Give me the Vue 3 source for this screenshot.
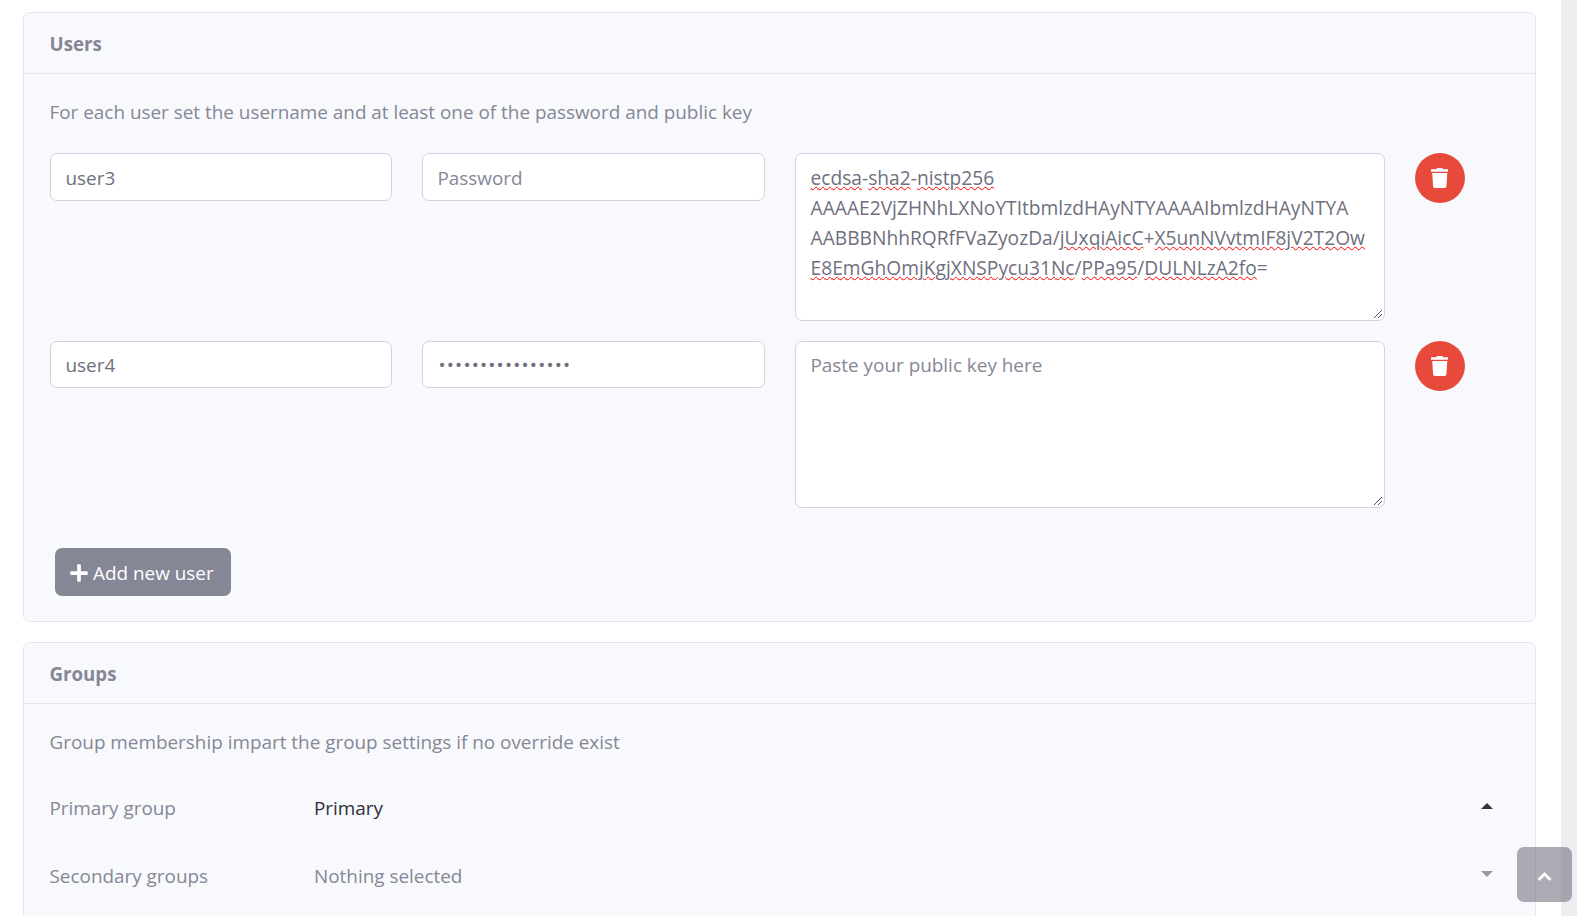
<script setup>
const trash = 'M432 32H312l-9.4-18.7A24 24 0 0 0 281.1 0H166.8a23.72 23.72 0 0 0-21.4 13.3L136 32H16A16 16 0 0 0 0 48v32a16 16 0 0 0 16 16h416a16 16 0 0 0 16-16V48a16 16 0 0 0-16-16zM53.2 467a48 48 0 0 0 47.9 45h245.8a48 48 0 0 0 47.9-45L416 128H32z'
</script>

<template>
  <div class="page">
    <main class="main">
      <section class="card">
        <h2 class="card-head">Users</h2>
        <div class="card-body">
          <p class="lead">For each user set the username and at least one of the password and public key</p>
          <div class="user-row">
            <input class="field" type="text" value="user3" placeholder="Username" />
            <input class="field wide" type="password" placeholder="Password" />
            <div class="area key">
              <span class="err">ecdsa</span>-<span class="err">sha2</span>-<span class="err">nistp256</span><br />AAAAE2VjZHNhLXNoYTItbmlzdHAyNTYAAAAIbmlzdHAyNTYA<br />AABBBNhhRQRfFVaZyozDa/<span class="err">jUxqiAicC</span>+<span class="err">X5unNVvtmIF8jV2T2Ow</span><br /><span class="err">E8EmGhOmjKgjXNSPycu31Nc</span>/<span class="err">PPa95</span>/<span class="err">DULNLzA2fo</span>=
              <svg class="grip" viewBox="0 0 10 10"><path d="M1 9 9 1M5 9 9 5" /></svg>
            </div>
            <button class="del" type="button" aria-label="Delete user">
              <svg viewBox="0 0 448 512"><path :d="trash" /></svg>
            </button>
          </div>
          <div class="user-row">
            <input class="field" type="text" value="user4" placeholder="Username" />
            <input class="field wide dots" type="password" value="abcdefghijklmnop" placeholder="Password" />
            <div class="area placeholder">
              Paste your public key here
              <svg class="grip" viewBox="0 0 10 10"><path d="M1 9 9 1M5 9 9 5" /></svg>
            </div>
            <button class="del" type="button" aria-label="Delete user">
              <svg viewBox="0 0 448 512"><path :d="trash" /></svg>
            </button>
          </div>
          <button class="add" type="button">
            <svg viewBox="0 0 448 512"><path d="M416 208H272V64c0-17.67-14.33-32-32-32h-32c-17.67 0-32 14.33-32 32v144H32c-17.67 0-32 14.33-32 32v32c0 17.67 14.33 32 32 32h144v144c0 17.67 14.33 32 32 32h32c17.67 0 32-14.33 32-32V304h144c17.67 0 32-14.33 32-32v-32c0-17.67-14.33-32-32-32z" /></svg>
            Add new user
          </button>
        </div>
      </section>

      <section class="card">
        <h2 class="card-head">Groups</h2>
        <div class="card-body">
          <p class="lead">Group membership impart the group settings if no override exist</p>
          <div class="select-row">
            <span class="label">Primary group</span>
            <span class="value">Primary</span>
            <span class="caret up"></span>
          </div>
          <div class="select-row">
            <span class="label">Secondary groups</span>
            <span class="value muted">Nothing selected</span>
            <span class="caret down"></span>
          </div>
        </div>
      </section>
    </main>
    <div class="track"></div>
    <a class="to-top" href="#" aria-label="Scroll to top">
      <svg viewBox="0 0 448 512"><path d="M240.971 130.524l194.343 194.343c9.373 9.373 9.373 24.569 0 33.941l-22.667 22.667c-9.357 9.357-24.522 9.375-33.901.04L224 227.495 69.255 381.516c-9.379 9.335-24.544 9.317-33.901-.04l-22.667-22.667c-9.373-9.373-9.373-24.569 0-33.941L207.03 130.525c9.372-9.373 24.568-9.373 33.941-.001z" /></svg>
    </a>
  </div>
</template>

<style>
html, body { margin: 0; overflow: hidden; background: #fff; }
</style>

<style scoped>
.page {
  position: relative;
  display: flex;
  height: 916px;
  overflow: hidden;
  font-family: "Open Sans", "Noto Sans", sans-serif;
  font-size: 18.9px;
  line-height: 30px;
  color: #858796;
}
.main {
  flex: 1;
  min-width: 0;
  padding: 12px 25px 0 23px;
  display: flex;
  flex-direction: column;
  gap: 20px;
}
.track { width: 16px; flex: none; background: #eeeef2; }
.card {
  background: #f8f9fd;
  border: 1px solid #e3e6f0;
  border-radius: 7px;
}
.card-head {
  box-sizing: border-box;
  margin: 0;
  height: 61px;
  padding: 1px 25px 0 25.5px;
  display: flex;
  align-items: center;
  font-size: 18.7px;
  font-weight: 700;
  color: #858796;
  border-bottom: 1px solid #e3e6f0;
}
.card-body { padding: 23px 25px 25px 25.5px; }
.lead { margin: 0 0 26px; }
.lead + .select-row { margin-top: 27px; }
.user-row {
  display: flex;
  gap: 30px;
  margin-bottom: 20px;
  height: 167.5px;
}
.field {
  flex: none;
  box-sizing: border-box;
  width: 342px;
  height: 47.5px;
  padding: 2px 15px 0;
  border: 1px solid #d1d3e2;
  border-radius: 7px;
  background: #fff;
  color: #6e707e;
  font: inherit;
  outline: none;
}
.field.wide { width: 343px; }
.field.dots { letter-spacing: 1.2px; padding-left: 16px; }
.field::placeholder { color: #858796; opacity: 1; }
.area {
  position: relative;
  flex: none;
  box-sizing: border-box;
  width: 590px;
  height: 167.5px;
  padding: 8px 15px;
  border: 1px solid #d1d3e2;
  border-radius: 7px;
  background: #fff;
  color: #6e707e;
  white-space: nowrap;
}
.key { font-size: 19.2px; padding-top: 9px; }
.placeholder { color: #858796; }
.err { text-decoration: underline wavy #f00 1px; text-underline-offset: 1px; }
.grip {
  position: absolute;
  right: 1px;
  bottom: 1px;
  width: 10px;
  height: 10px;
  fill: none;
  stroke: #555;
  stroke-width: 1;
}
.del {
  flex: none;
  width: 50px;
  height: 50px;
  padding: 0;
  border: 0;
  border-radius: 50%;
  background: #e74a3b;
  display: flex;
  align-items: center;
  justify-content: center;
}
.del svg { width: 17.5px; height: 20px; fill: #fff; }
.add {
  display: flex;
  align-items: center;
  gap: 5px;
  box-sizing: border-box;
  width: 176px;
  height: 48px;
  margin: 40px 0 0 5px;
  padding: 2px 15.5px 0;
  border: 0;
  border-radius: 7px;
  background: #858796;
  color: #fff;
  font: inherit;
  white-space: nowrap;
}
.add svg { width: 18px; height: 20px; fill: #fff; flex: none; }
.select-row {
  display: flex;
  align-items: center;
  height: 48px;
  margin-bottom: 20px;
}
.label { width: 264.5px; flex: none; }
.value { flex: 1; color: #2f2f3a; }
.value.muted { color: #858796; }
.caret {
  flex: none;
  width: 0;
  height: 0;
  margin-right: 17px;
  border-left: 6px solid transparent;
  border-right: 6px solid transparent;
}
.caret.up { border-bottom: 6px solid #33333f; margin-top: -4px; }
.caret.down { border-top: 6px solid #999; margin-top: -4px; }
.to-top {
  position: absolute;
  left: 1517px;
  top: 847px;
  width: 55px;
  height: 55px;
  border-radius: 7px;
  background: rgba(90, 92, 105, 0.5);
  display: flex;
  align-items: center;
  justify-content: center;
}
.to-top svg { width: 13px; height: 15px; fill: #fff; stroke: #fff; stroke-width: 24; margin-top: 4px; overflow: visible; }
</style>
